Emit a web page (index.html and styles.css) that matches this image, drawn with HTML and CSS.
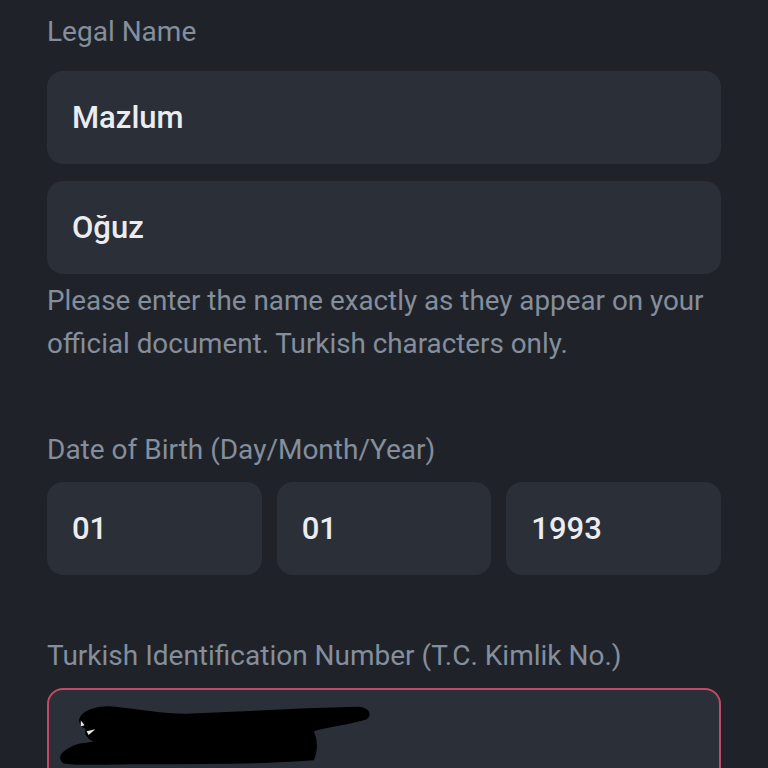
FILE: index.html
```html
<!DOCTYPE html>
<html>
<head>
<meta charset="utf-8">
<link rel="stylesheet" href="styles.css">
</head>
<body>
<div class="form">
  <div class="label label-first">Legal Name</div>
  <div class="field">Mazlum</div>
  <div class="field field-gap">Oğuz</div>
  <p class="hint">Please enter the name exactly as they appear on your official document. Turkish characters only.</p>

  <div class="label label-dob">Date of Birth (Day/Month/Year)</div>
  <div class="dob-row">
    <div class="field">01</div>
    <div class="field">01</div>
    <div class="field">1993</div>
  </div>

  <div class="label label-id">Turkish Identification Number (T.C. Kimlik No.)</div>
  <div class="field field-error">
    <svg class="redact" viewBox="0 0 330 70" width="322" height="68">
      <path d="M33 13 C40 6 55 3 68 5 C95 8 115 12 140 12 C200 10 260 6 318 5 C330 6 332 14 326 18 C305 24 285 26 272 30 C276 40 276 50 272 60 C220 64 160 64 100 64 C60 64 25 66 14 63 C8 58 10 52 22 46 C30 42 40 42 45 41 C38 37 35 33 37 28 C30 24 28 18 33 13 Z" fill="#000"/>
      <path d="M32 19 L36 24 L32 25 Z" fill="#e8e8e8"/>
      <path d="M38 30 L47 28 L40 34 Z" fill="#e8e8e8"/>
    </svg>
  </div>
</div>
</body>
</html>
```

FILE: styles.css
```css
html, body {
  margin: 0;
  padding: 0;
}
body {
  background: #1f2329;
  width: 768px;
  height: 768px;
  overflow: hidden;
  font-family: Roboto, "Noto Sans", "Liberation Sans", sans-serif;
}
.form {
  padding: 0 47px;
}
.label {
  color: #848e9c;
  font-size: 28px;
  line-height: 32px;
}
.label-first {
  padding-top: 16px;
  margin-bottom: 23px;
}
.field {
  position: relative;
  box-sizing: border-box;
  height: 93px;
  background: #2a2f38;
  border-radius: 16px;
  padding: 0 25px;
  display: flex;
  align-items: center;
  color: #eaecef;
  font-size: 31px;
  font-weight: 500;
}
.field-gap {
  margin-top: 17px;
}
.hint {
  margin: 5px 0 0;
  color: #848e9c;
  font-size: 27.8px;
  line-height: 43px;
}
.label-dob {
  margin-top: 69px;
  margin-bottom: 16px;
}
.dob-row {
  display: grid;
  grid-template-columns: 1fr 1fr 1fr;
  gap: 15px;
}
.label-id {
  margin-top: 65px;
  margin-bottom: 16px;
}
.field-error {
  border: 2px solid #c24a64;
  height: 120px;
}
.redact {
  position: absolute;
  left: 0;
  top: 12px;
}
```
